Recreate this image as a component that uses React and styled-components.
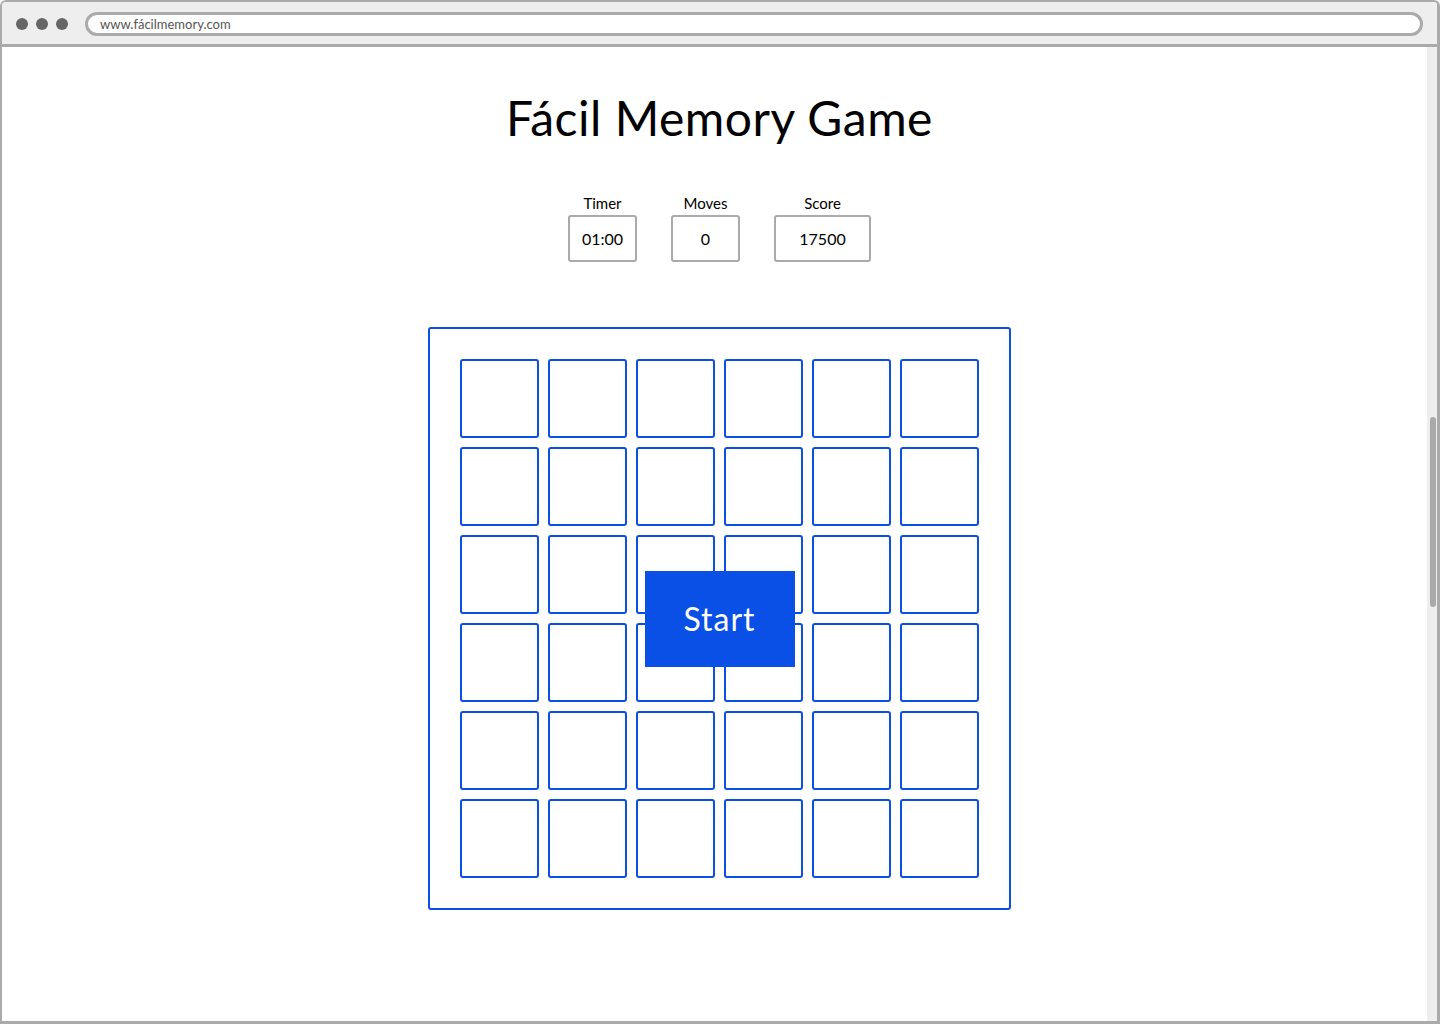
import React from "react";
import styled, { createGlobalStyle } from "styled-components";

const Global = createGlobalStyle`
  html, body { margin: 0; padding: 0; background: #fff; }
  body { font-family: "Comic Sans MS", "Lato", "Noto Sans", sans-serif; }
  * { box-sizing: border-box; }
`;

const BLUE = "#0a50e6";
const GRAY = "#aaaaaa";
const HAND = `"Comic Sans MS", "Lato", "Noto Sans", sans-serif`;

const Window = styled.div`
  width: 1440px;
  height: 1024px;
  border: 2px solid ${GRAY};
  border-right-width: 3px;
  border-bottom-width: 3px;
  border-radius: 6px 6px 0 0;
  display: flex;
  flex-direction: column;
  overflow: hidden;
  background: #fff;
`;

const TopBar = styled.div`
  height: 45px;
  flex: none;
  background: #eeeeee;
  border-bottom: 3px solid ${GRAY};
  display: flex;
  align-items: center;
  padding: 0 14px 0 14px;
`;

const Dots = styled.div`
  display: flex;
  gap: 8px;
  margin-right: 17px;
  padding-top: 2px;
`;

const Dot = styled.span`
  width: 12px;
  height: 12px;
  border-radius: 50%;
  background: #666666;
`;

const UrlBar = styled.div`
  flex: 1;
  height: 24px;
  margin-top: 2px;
  border: 3px solid ${GRAY};
  border-radius: 12px;
  background: #fff;
  display: flex;
  align-items: center;
  padding-left: 12px;
  font-family: ${HAND};
  font-size: 13px;
  color: #555;
`;

const Viewport = styled.div`
  position: relative;
  flex: 1;
  display: flex;
  flex-direction: column;
  align-items: center;
`;

const ScrollTrack = styled.div`
  position: absolute;
  right: 0;
  top: 0;
  bottom: 0;
  width: 10px;
  background: #eeeeee;
`;

const ScrollThumb = styled.div`
  position: absolute;
  left: 3px;
  top: 370px;
  width: 6px;
  height: 190px;
  border-radius: 3px;
  background: ${GRAY};
`;

const Title = styled.h1`
  margin: 41px 0 0;
  font-family: ${HAND};
  font-weight: 400;
  font-size: 48px;
  line-height: 60px;
  color: #000;
  letter-spacing: 0.5px;
`;

const Stats = styled.div`
  display: flex;
  gap: 34px;
  margin-top: 46px;
`;

const Stat = styled.div`
  display: flex;
  flex-direction: column;
  align-items: center;
  gap: 3px;
`;

const StatLabel = styled.div`
  font-family: ${HAND};
  font-size: 15px;
  line-height: 18px;
  color: #000;
`;

const StatBox = styled.div`
  width: ${(p) => p.$w}px;
  height: 47px;
  border: 2px solid ${GRAY};
  border-radius: 3px;
  display: flex;
  align-items: center;
  justify-content: center;
  font-family: ${HAND};
  font-size: 16px;
  color: #000;
`;

const Board = styled.div`
  position: relative;
  margin-top: 65px;
  width: 583px;
  height: 583px;
  border: 2px solid ${BLUE};
  border-radius: 3px;
  padding: 30px;
  display: grid;
  grid-template-columns: repeat(6, 79px);
  grid-template-rows: repeat(6, 79px);
  gap: 9px;
`;

const Card = styled.div`
  border: 2px solid ${BLUE};
  border-radius: 3px;
  background: #fff;
`;

const StartButton = styled.button`
  position: absolute;
  left: 50%;
  top: 50%;
  transform: translate(-50%, -50%);
  width: 150px;
  height: 96px;
  border: none;
  background: ${BLUE};
  color: #fff;
  font-family: ${HAND};
  font-size: 32px;
  letter-spacing: 1px;
  cursor: pointer;
`;

export default function App() {
  const cards = Array.from({ length: 36 });
  return (
    <>
      <Global />
      <Window>
        <TopBar>
          <Dots>
            <Dot />
            <Dot />
            <Dot />
          </Dots>
          <UrlBar>www.fácilmemory.com</UrlBar>
        </TopBar>
        <Viewport>
          <ScrollTrack>
            <ScrollThumb />
          </ScrollTrack>
          <Title>Fácil Memory Game</Title>
          <Stats>
            <Stat>
              <StatLabel>Timer</StatLabel>
              <StatBox $w={69}>01:00</StatBox>
            </Stat>
            <Stat>
              <StatLabel>Moves</StatLabel>
              <StatBox $w={69}>0</StatBox>
            </Stat>
            <Stat>
              <StatLabel>Score</StatLabel>
              <StatBox $w={97}>17500</StatBox>
            </Stat>
          </Stats>
          <Board>
            {cards.map((_, i) => (
              <Card key={i} />
            ))}
            <StartButton>Start</StartButton>
          </Board>
        </Viewport>
      </Window>
    </>
  );
}
